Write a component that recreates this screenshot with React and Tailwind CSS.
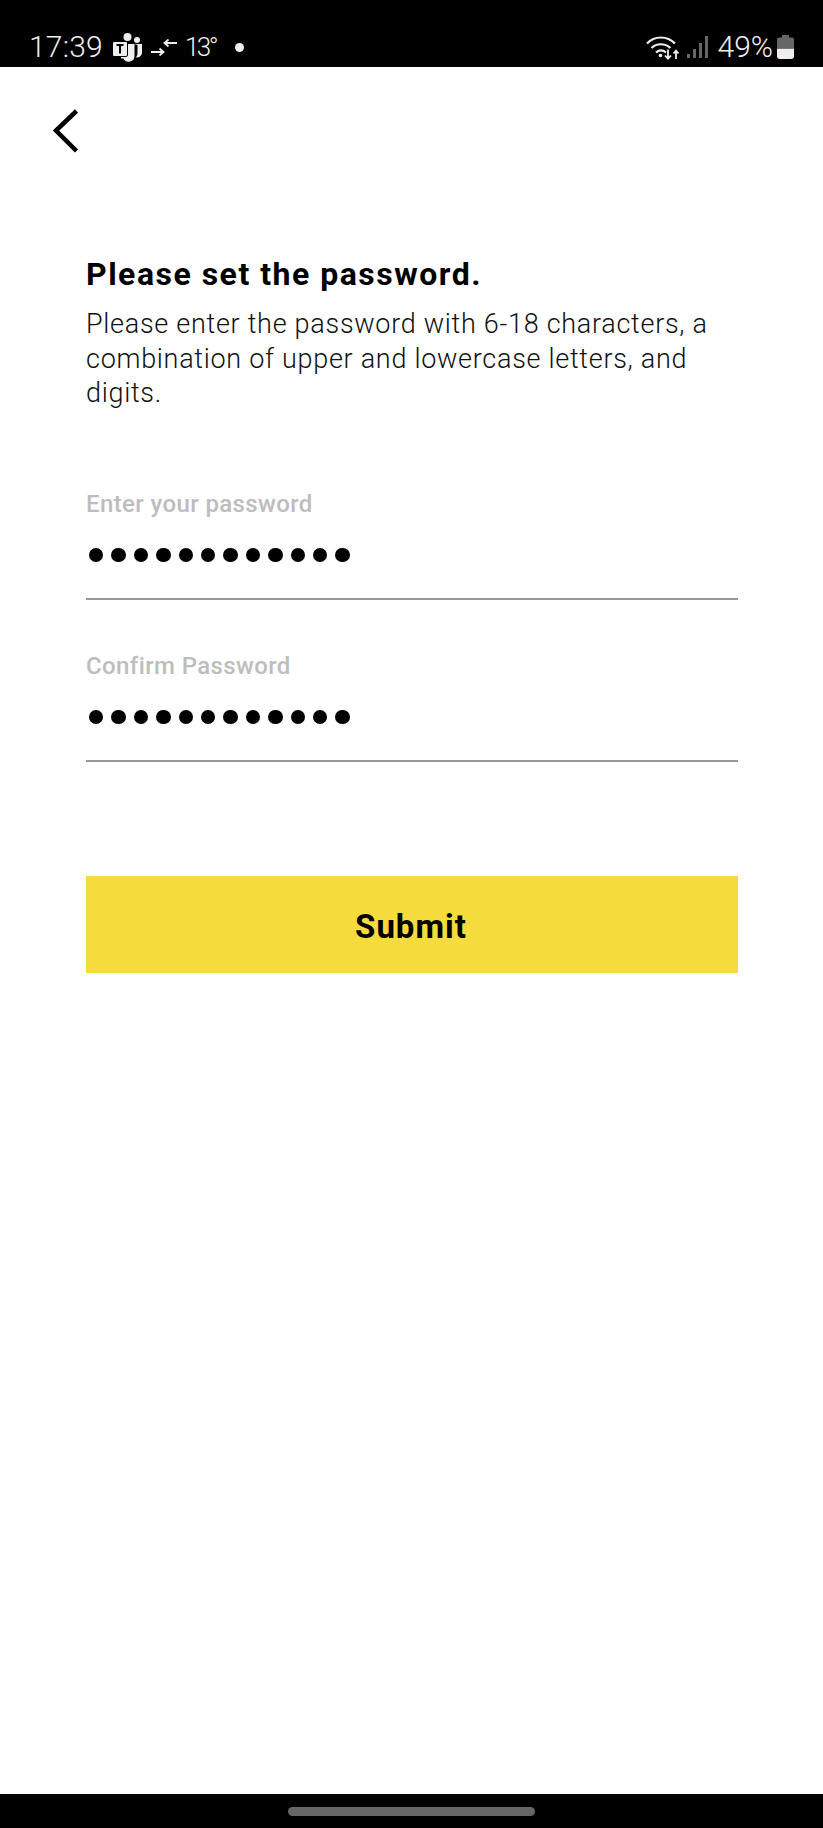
const font = { fontFamily: '"Roboto", "Liberation Sans", sans-serif' };

function Teams() {
  return (
    <svg width="31" height="30" viewBox="0 0 31 30" className="block shrink-0">
      <circle cx="15.5" cy="5" r="4" fill="#eee" />
      <circle cx="25" cy="8" r="3" fill="#eee" />
      <path d="M22 12h8v9a5 5 0 0 1-6 4.500c1-1.500 1.500-3 1.500-5V13z" fill="#eee" />
      <path d="M9 12h13.500v12a5.800 5.800 0 0 1-11 2.500H9z" fill="#eee" />
      <rect x="0.500" y="9.500" width="15" height="15" rx="1.500" fill="#eee" stroke="#000" strokeWidth="1" />
      <path d="M4.500 13h7M8 13v8.500" stroke="#000" strokeWidth="2" fill="none" />
    </svg>
  );
}

function Arrows() {
  return (
    <svg width="26" height="17" viewBox="0 0 26 17" className="block shrink-0">
      <path d="M0 13h12M8.500 9.500 12.500 13l-4 3.500" stroke="#eee" strokeWidth="1.800" fill="none" />
      <path d="M26 4H14M17.500 0.500 13.500 4l4 3.500" stroke="#eee" strokeWidth="1.800" fill="none" />
    </svg>
  );
}

function Wifi() {
  return (
    <svg width="34" height="25" viewBox="0 0 34 25" className="block shrink-0">
      <path d="M1 8.500C8.500 0.500 21 0.500 29 8.500" stroke="#eee" strokeWidth="2.200" fill="none" />
      <path d="M5.500 13c5-5 13.500-5 19 0" stroke="#eee" strokeWidth="2.200" fill="none" />
      <path d="M10 17.500c3-2.500 7-2.500 10 0" stroke="#eee" strokeWidth="2.200" fill="none" />
      <circle cx="14.500" cy="20.500" r="1.800" fill="#eee" />
      <path d="M22 14.500v9M19 20.500l3 3.200 3-3.200" stroke="#eee" strokeWidth="1.800" fill="none" />
      <path d="M30 24v-8M27.500 18.500l2.500-2.800 2.500 2.800" stroke="#eee" strokeWidth="1.800" fill="none" />
    </svg>
  );
}

function Signal() {
  return (
    <svg width="21" height="22" viewBox="0 0 21 22" className="block shrink-0">
      <rect x="0" y="18" width="3" height="4" fill="#666" />
      <rect x="6" y="13" width="3" height="9" fill="#666" />
      <rect x="12" y="7" width="3" height="15" fill="#666" />
      <rect x="18" y="0" width="3" height="22" fill="#666" />
    </svg>
  );
}

function Battery() {
  return (
    <svg width="17" height="24" viewBox="0 0 17 24" className="block shrink-0">
      <path d="M5 0h7v2.500h3a2 2 0 0 1 2 2V13H0V4.500a2 2 0 0 1 2-2h3z" fill="#666" />
      <path d="M0 13.500h17V21a3 3 0 0 1-3 3H3a3 3 0 0 1-3-3z" fill="#eee" />
    </svg>
  );
}

function Dots() {
  const dots = Array.from({ length: 12 }, (_, i) => i);
  return (
    <div className="flex h-[15px] gap-[8px] pl-[3px]" aria-label="password">
      {dots.map((d) => (
        <span key={d} className="h-[14.400px] w-[14.400px] rounded-full bg-black" />
      ))}
    </div>
  );
}

function Field({ label }) {
  return (
    <div className="flex flex-col">
      <div className="h-[30px] text-[24px] leading-[30px] font-medium tracking-[0.38px] text-[#bdbdbd]">{label}</div>
      <div className="mt-[29px]">
        <Dots />
      </div>
      <div className="mt-[35px] h-[2px] bg-[#999999]" />
    </div>
  );
}

export default function App() {
  return (
    <div className="flex h-[1828px] w-[823px] flex-col bg-white" style={font}>
      <div className="flex h-[67px] shrink-0 items-end justify-between bg-black pb-[3px] pl-[29px] pr-[29px] text-[#eeeeee]">
        <div className="flex items-center">
          <span className="text-[30px] leading-[34px] font-light tracking-[0.2px]">17:39</span>
          <span className="ml-[9px]"><Teams /></span>
          <span className="ml-[8px]"><Arrows /></span>
          <span className="ml-[8px] text-[26px] leading-[34px] font-light tracking-[-2.5px]">13°</span>
          <span className="ml-[19px] h-[9px] w-[9px] rounded-full bg-[#eeeeee]" />
        </div>
        <div className="flex items-center">
          <Wifi />
          <span className="ml-[7px]"><Signal /></span>
          <span className="ml-[10px] text-[30px] leading-[34px] font-light">49%</span>
          <span className="ml-[4px]"><Battery /></span>
        </div>
      </div>

      <div className="flex flex-1 flex-col">
        <div className="pl-[53px] pt-[42px]">
          <svg width="26" height="44" viewBox="0 0 26 44" className="block">
            <path d="M23.500 2 3 21.500 23.500 42" stroke="#000" strokeWidth="4.500" fill="none" />
          </svg>
        </div>

        <div className="mt-[102px] flex flex-col pl-[86px] pr-[85px]">
          <h1 className="text-[32px] leading-[38px] font-bold tracking-[1.5px] text-black">Please set the password.</h1>
          <p className="mt-[14px] text-[27px] leading-[34.500px] font-light tracking-[0.71px] text-[#111111]">
            Please enter the password with 6-18 characters, a combination of upper and lowercase letters, and digits.
          </p>

          <div className="mt-[78px] flex flex-col gap-[51.500px]">
            <Field label="Enter your password" />
            <Field label="Confirm Password" />
          </div>

          <button className="mt-[114px] flex h-[97px] items-center justify-center bg-[#f5db3b] pb-0 pr-[2px] pt-[4px] text-[33px] font-bold tracking-[1px] text-black">
            Submit
          </button>
        </div>
      </div>

      <div className="flex h-[34px] shrink-0 justify-center bg-black pt-[13px]">
        <div className="h-[9px] w-[247px] rounded-full bg-[#666666]" />
      </div>
    </div>
  );
}
